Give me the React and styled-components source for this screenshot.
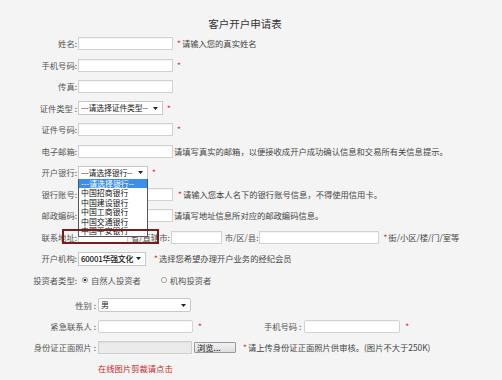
import styled, { createGlobalStyle } from 'styled-components';

const GlobalStyle = createGlobalStyle`
  body {
    margin: 0;
    background: #f4f4f4;
    font-family: "Noto Sans CJK SC", "Noto Sans", sans-serif;
    font-size: 8.3px;
    color: #444;
  }
`;

const banks = ['---请选择银行--', '中国招商银行', '中国建设银行', '中国工商银行', '中国交通银行', '中国平安银行'];

function Arrow() {
  return (
    <svg width="5" height="3" viewBox="0 0 5 3">
      <path d="M0 0H5L2.5 3Z" fill="#222" />
    </svg>
  );
}

function FakeSelect({ width, value, rounded, children }) {
  return (
    <SelectBox $width={width} $rounded={rounded}>
      <SelectText>{value}</SelectText>
      <Arrow />
      {children}
    </SelectBox>
  );
}

export default function App() {
  return (
    <Page>
      <GlobalStyle />
      <Title>客户开户申请表</Title>

      <Row>
        <Label>姓名:</Label>
        <TextInput $width={95} />
        <Star>*</Star>
        <Hint>请输入您的真实姓名</Hint>
      </Row>
      <Row>
        <Label>手机号码:</Label>
        <TextInput $width={95} />
        <Star>*</Star>
      </Row>
      <Row>
        <Label>传真:</Label>
        <TextInput $width={95} />
      </Row>
      <Row>
        <Label>证件类型 :</Label>
        <FakeSelect width={85} value="---请选择证件类型--" />
        <Star>*</Star>
      </Row>
      <Row>
        <Label>证件号码:</Label>
        <TextInput $width={95} />
        <Star>*</Star>
      </Row>
      <Row>
        <Label>电子邮箱:</Label>
        <TextInput $width={95} />
        <Hint>请填写真实的邮箱，以便接收成开户成功确认信息和交易所有关信息提示。</Hint>
      </Row>
      <Row $top>
        <Label>开户银行:</Label>
        <FakeSelect width={70} value="---请选择银行--">
          <OptionList>
            {banks.map((b, i) => (
              <Option key={b} $active={i === 0}>{b}</Option>
            ))}
          </OptionList>
        </FakeSelect>
        <Star>*</Star>
      </Row>
      <Row>
        <Label>银行账号:</Label>
        <TextInput $width={95} />
        <Star $gap={5}>*</Star>
        <Hint>请输入您本人名下的银行账号信息，不得使用信用卡。</Hint>
      </Row>
      <Row>
        <Label>邮政编码:</Label>
        <TextInput $width={95} />
        <Hint>请填写地址信息所对应的邮政编码信息。</Hint>
      </Row>
      <Row>
        <Label>联系地址:</Label>
        <TextInput $width={50} />
        <Inline $gap={3}>省/直辖市:</Inline>
        <TextInput $width={51} $gap={1} />
        <Inline $gap={3}>市/区/县:</Inline>
        <TextInput $width={120} />
        <Star>*</Star>
        <Hint>街/小区/楼/门/室等</Hint>
        <MarkBox />
      </Row>
      <Row>
        <Label>开户机构:</Label>
        <FakeSelect width={68} value={<Strong>60001华强文化</Strong>} />
        <Star $gap={8}>*</Star>
        <Hint>选择您希望办理开户业务的经纪会员</Hint>
      </Row>
      <Row>
        <Label>投资者类型:</Label>
        <Radio $checked $gap={5} />
        <Inline $gap={3}>自然人投资者</Inline>
        <Radio $gap={20} />
        <Inline $gap={3}>机构投资者</Inline>
      </Row>

      <Section>
        <WideRow>
          <WideLabel>性别 :</WideLabel>
          <FakeSelect width={93} value="男" rounded />
        </WideRow>
        <WideRow>
          <WideLabel>紧急联系人 :</WideLabel>
          <TextInput $width={95} $rounded />
          <Star $gap={5}>*</Star>
          <SideLabel>手机号码 :</SideLabel>
          <TextInput $width={96} $rounded />
          <Star $gap={5}>*</Star>
        </WideRow>
        <WideRow>
          <WideLabel>身份证正面照片 :</WideLabel>
          <TextInput $width={94} $disabled disabled />
          <BrowseButton>浏览...</BrowseButton>
          <Star $gap={7}>*</Star>
          <Hint>请上传身份证正面照片供审核。(图片不大于250K)</Hint>
        </WideRow>
        <WideRow>
          <WideLabel />
          <CropLink>在线图片剪裁请点击</CropLink>
        </WideRow>
      </Section>
    </Page>
  );
}

const Page = styled.div`
  width: 502px;
  height: 380px;
  overflow: hidden;
`;

const Title = styled.div`
  height: 11px;
  line-height: 11px;
  padding: 17.5px 12px 0 0;
  margin-bottom: 4.25px;
  text-align: center;
  font-size: 10.5px;
  color: #333;
`;

const Row = styled.div`
  position: relative;
  display: flex;
  align-items: center;
  height: 21.5px;
  white-space: nowrap;
  z-index: ${(p) => (p.$top ? 3 : 'auto')};
`;

const Label = styled.span`
  flex: none;
  width: 77px;
  text-align: right;
  color: #555;
  line-height: 1;
`;

const TextInput = styled.input`
  flex: none;
  box-sizing: border-box;
  width: ${(p) => p.$width}px;
  height: 13px;
  margin: 0 0 0 ${(p) => (p.$gap ?? 1)}px;
  padding: 0;
  border: 1px solid ${(p) => (p.$disabled ? '#cfcfcf' : '#d2d2d2')};
  border-radius: ${(p) => (p.$rounded ? '2px' : '0')};
  background: ${(p) => (p.$disabled ? '#ebebeb' : '#fff')};
  box-shadow: inset 0 1px 1px rgba(0, 0, 0, 0.05);
`;

const SelectBox = styled.div`
  position: relative;
  flex: none;
  box-sizing: border-box;
  display: flex;
  align-items: center;
  justify-content: space-between;
  width: ${(p) => p.$width}px;
  height: 14px;
  margin-left: 1px;
  padding: 0 4px 0 2px;
  border: 1px solid #c8c8c8;
  border-radius: ${(p) => (p.$rounded ? '2px' : '0')};
  background: #fff;
  color: #222;
  line-height: 1;
`;

const SelectText = styled.span`
  font-size: 7.9px;
  letter-spacing: -0.2px;
`;

const Strong = styled.span`
  color: #111;
  font-weight: 500;
`;

const OptionList = styled.div`
  position: absolute;
  top: 100%;
  left: -1px;
  box-sizing: border-box;
  width: 70px;
  border: 1px solid #555;
  border-top: none;
  background: #fff;
`;

const Option = styled.div`
  height: 9.6px;
  line-height: 9.6px;
  padding-left: 2px;
  font-size: 7.9px;
  background: ${(p) => (p.$active ? '#3d8ee8' : '#fff')};
  color: ${(p) => (p.$active ? '#fff' : '#111')};
`;

const Star = styled.span`
  margin-left: ${(p) => p.$gap ?? 4}px;
  color: #e03030;
  line-height: 1;
`;

const Hint = styled.span`
  margin-left: 1px;
  color: #444;
  line-height: 1;
`;

const Inline = styled.span`
  margin-left: ${(p) => p.$gap ?? 0}px;
  color: #555;
  line-height: 1;
`;

const MarkBox = styled.div`
  position: absolute;
  left: 62px;
  top: 2.5px;
  width: 97px;
  height: 15px;
  box-sizing: border-box;
  border: 2px solid #761e1e;
  z-index: 4;
`;

const Radio = styled.span`
  flex: none;
  box-sizing: border-box;
  width: 6px;
  height: 6px;
  margin-left: ${(p) => p.$gap}px;
  border: 1px solid #999;
  border-radius: 50%;
  background: ${(p) =>
    p.$checked ? 'radial-gradient(circle, #334 0 1.4px, #fff 1.6px)' : '#fff'};
`;

const Section = styled.div`
  padding-top: 3.75px;
`;

const WideRow = styled.div`
  display: flex;
  align-items: center;
  height: 21px;
  white-space: nowrap;
`;

const WideLabel = styled.span`
  flex: none;
  width: 96px;
  margin-right: 1px;
  text-align: right;
  color: #555;
  line-height: 1;
`;

const SideLabel = styled.span`
  margin: 0 2px 0 62px;
  color: #555;
  line-height: 1;
`;

const BrowseButton = styled.button`
  box-sizing: border-box;
  width: 42px;
  height: 11px;
  margin-left: 2px;
  padding: 0 0 0 2px;
  border: 1px solid #999;
  border-radius: 1px;
  background: linear-gradient(#f2f2f2, #dedede);
  font-family: inherit;
  font-size: 8.3px;
  line-height: 1;
  color: #111;
  text-align: left;
`;

const CropLink = styled.span`
  margin-left: 1px;
  color: #c62828;
  line-height: 1;
`;
